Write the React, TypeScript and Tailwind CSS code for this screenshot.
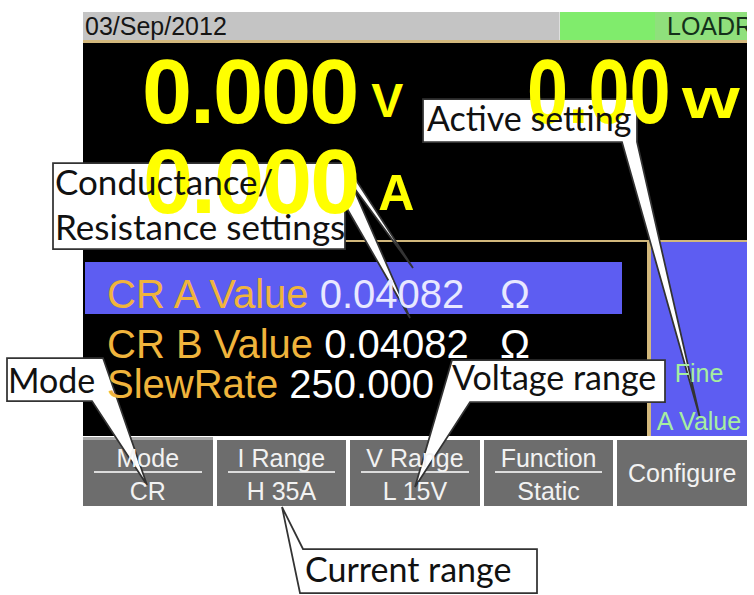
import React from "react";

const Btn = ({ top, bottom }: { top: string; bottom: string }) => (
  <div className="mt-[4px] bg-[#6d6d6d] flex flex-col text-[#f2f2f2] text-[25px] leading-[25px]">
    <div className="pt-[6px] text-center relative z-10">{top}</div>
    <div className="mx-[11px] h-[2px] bg-[#dcdcdc]" />
    <div className="mt-[6px] text-center relative z-10">{bottom}</div>
  </div>
);

const T = ({ c, children }: { c: string; children: React.ReactNode }) => (
  <span className={"relative z-10 " + c}>{children}</span>
);

export default function App() {
  return (
    <div className="relative w-[754px] h-[595px] bg-white overflow-hidden font-['Liberation_Sans',Arial,sans-serif]">
      <div className="pt-[12px] pl-[83px]">
        <div className="w-[664px] flex flex-col">
          {/* status bar */}
          <div className="flex h-[28px]">
            <div className="w-[476px] bg-[#c4c4c4] text-[25px] leading-[28px] pl-[2px] text-[#151515]">03/Sep/2012</div>
            <div className="w-[1px] bg-[#dedede]" />
            <div className="w-[95px] bg-[#80ec6c]" />
            <div className="flex-1 bg-[#8fe07c] overflow-hidden whitespace-nowrap text-[25px] leading-[28px] pl-[12px] text-[#14301a]">LOADR</div>
          </div>
          <div className="h-[3px] bg-[#d2b87c]" />
          {/* screen */}
          <div className="h-[393px] bg-black flex flex-col">
            <div className="relative z-10 h-[197px] pt-[4px] font-bold text-[#ffff00] whitespace-nowrap">
              <div className="flex items-end h-[90px] pl-[59px]">
                <div className="w-[385px] flex items-end">
                  <span className="text-[90px] leading-[90px] tracking-[-2px]">0.000</span>
                  <span className="text-[48px] leading-[48px] ml-[14px] mb-[12px]">V</span>
                </div>
                <div className="w-[143px] text-[90px] leading-[90px]">
                  <span className="inline-block origin-left scale-x-[0.82]">0.00</span>
                </div>
                <div className="w-[58px] ml-[12px] mb-[10px] text-[58px] leading-[58px]">
                  <span className="inline-block origin-left scale-x-[1.28]">w</span>
                </div>
              </div>
              <div className="flex items-end h-[90px] pl-[60px]">
                <span className="text-[90px] leading-[90px] tracking-[-2px]">0.000</span>
                <span className="text-[50px] leading-[50px] ml-[20px] mb-[9px]">A</span>
              </div>
            </div>
            <div className="h-[2px] bg-[#d2b87c]" />
            <div className="flex flex-1">
              <div className="w-[564px] pt-[20px] text-[40px] leading-[40px] whitespace-nowrap">
                <div className="ml-[2px] w-[537px] h-[52px] bg-[#5d5df2] pt-[12px] pl-[22px] flex">
                  <span className="w-[393px]">
                    <T c="text-[#f0b43c]">CR A Value</T>{" "}
                    <T c="text-[#e8e8ff]">0.04082</T>
                  </span>
                  <T c="text-[#e8e8ff]">Ω</T>
                </div>
                <div className="mt-[10px] h-[40px] pl-[24px] flex">
                  <span className="w-[393px]">
                    <T c="text-[#f0b43c]">CR B Value</T>{" "}
                    <T c="text-white">0.04082</T>
                  </span>
                  <T c="text-white">Ω</T>
                </div>
                <div className="h-[40px] pl-[24px] flex">
                  <span className="w-[393px]">
                    <T c="text-[#f0b43c]">SlewRate</T>{" "}
                    <T c="text-white">250.000</T>
                  </span>
                  <T c="text-white">mA/uS</T>
                </div>
              </div>
              <div className="w-[4px] bg-[#d2b87c]" />
              <div className="flex-1 bg-[#5d5df2] flex flex-col items-center justify-end pb-[2px] gap-[23px] text-[25px] leading-[25px] text-[#a6eea0]">
                <T c="">Fine</T>
                <T c="">A Value</T>
              </div>
            </div>
          </div>
          {/* soft keys */}
          <div className="grid grid-cols-5 gap-x-[4px] h-[70px]">
            <div className="mt-[1px] border-t-[3px] border-[#a8a8a8] bg-[#6d6d6d] flex flex-col text-[#f2f2f2] text-[25px] leading-[25px]">
              <div className="pt-[6px] text-center relative z-10">Mode</div>
              <div className="mx-[11px] h-[2px] bg-[#dcdcdc]" />
              <div className="mt-[6px] text-center relative z-10">CR</div>
            </div>
            <Btn top="I Range" bottom="H 35A" />
            <Btn top="V Range" bottom="L 15V" />
            <Btn top="Function" bottom="Static" />
            <div className="mt-[4px] bg-[#6d6d6d] flex items-center justify-center text-[#f2f2f2] text-[25px] leading-[25px]">
              <T c="">Configure</T>
            </div>
          </div>
        </div>
      </div>

      {/* callout shapes */}
      <svg className="absolute left-0 top-0 z-[5] pointer-events-none" width="754" height="595" viewBox="0 0 754 595">
        <g fill="#ffffff" stroke="#333333" strokeWidth="1.75" strokeLinejoin="miter">
          <polygon points="423,99 637,99 637,142 700,418 622,142 423,142" />
          <polygon points="53,163 345,163 413,268 352,185 410,318 345,205 345,249 53,249" />
          <polygon points="7,358 103,358 147,485 92,401 7,401" />
          <polygon points="452,360 665,360 665,402 470,402 415,487" />
          <polygon points="282,507 303,549 537,549 537,593 300,593" />
        </g>
      </svg>

      {/* callout texts */}
      <div className="absolute inset-0 z-20 pointer-events-none font-['Lato',sans-serif] text-[34px] leading-[34px] text-[#111] whitespace-nowrap">
        <div className="absolute left-[427px] top-[101px]">Active setting</div>
        <div className="absolute left-[55px] top-[159px] text-[35px] leading-[45px]">
          Conductance/
          <br />
          Resistance settings
        </div>
        <div className="absolute left-[8px] top-[363px]">Mode</div>
        <div className="absolute left-[452px] top-[360px]">Voltage range</div>
        <div className="absolute left-[305px] top-[552px]">Current range</div>
      </div>
    </div>
  );
}
